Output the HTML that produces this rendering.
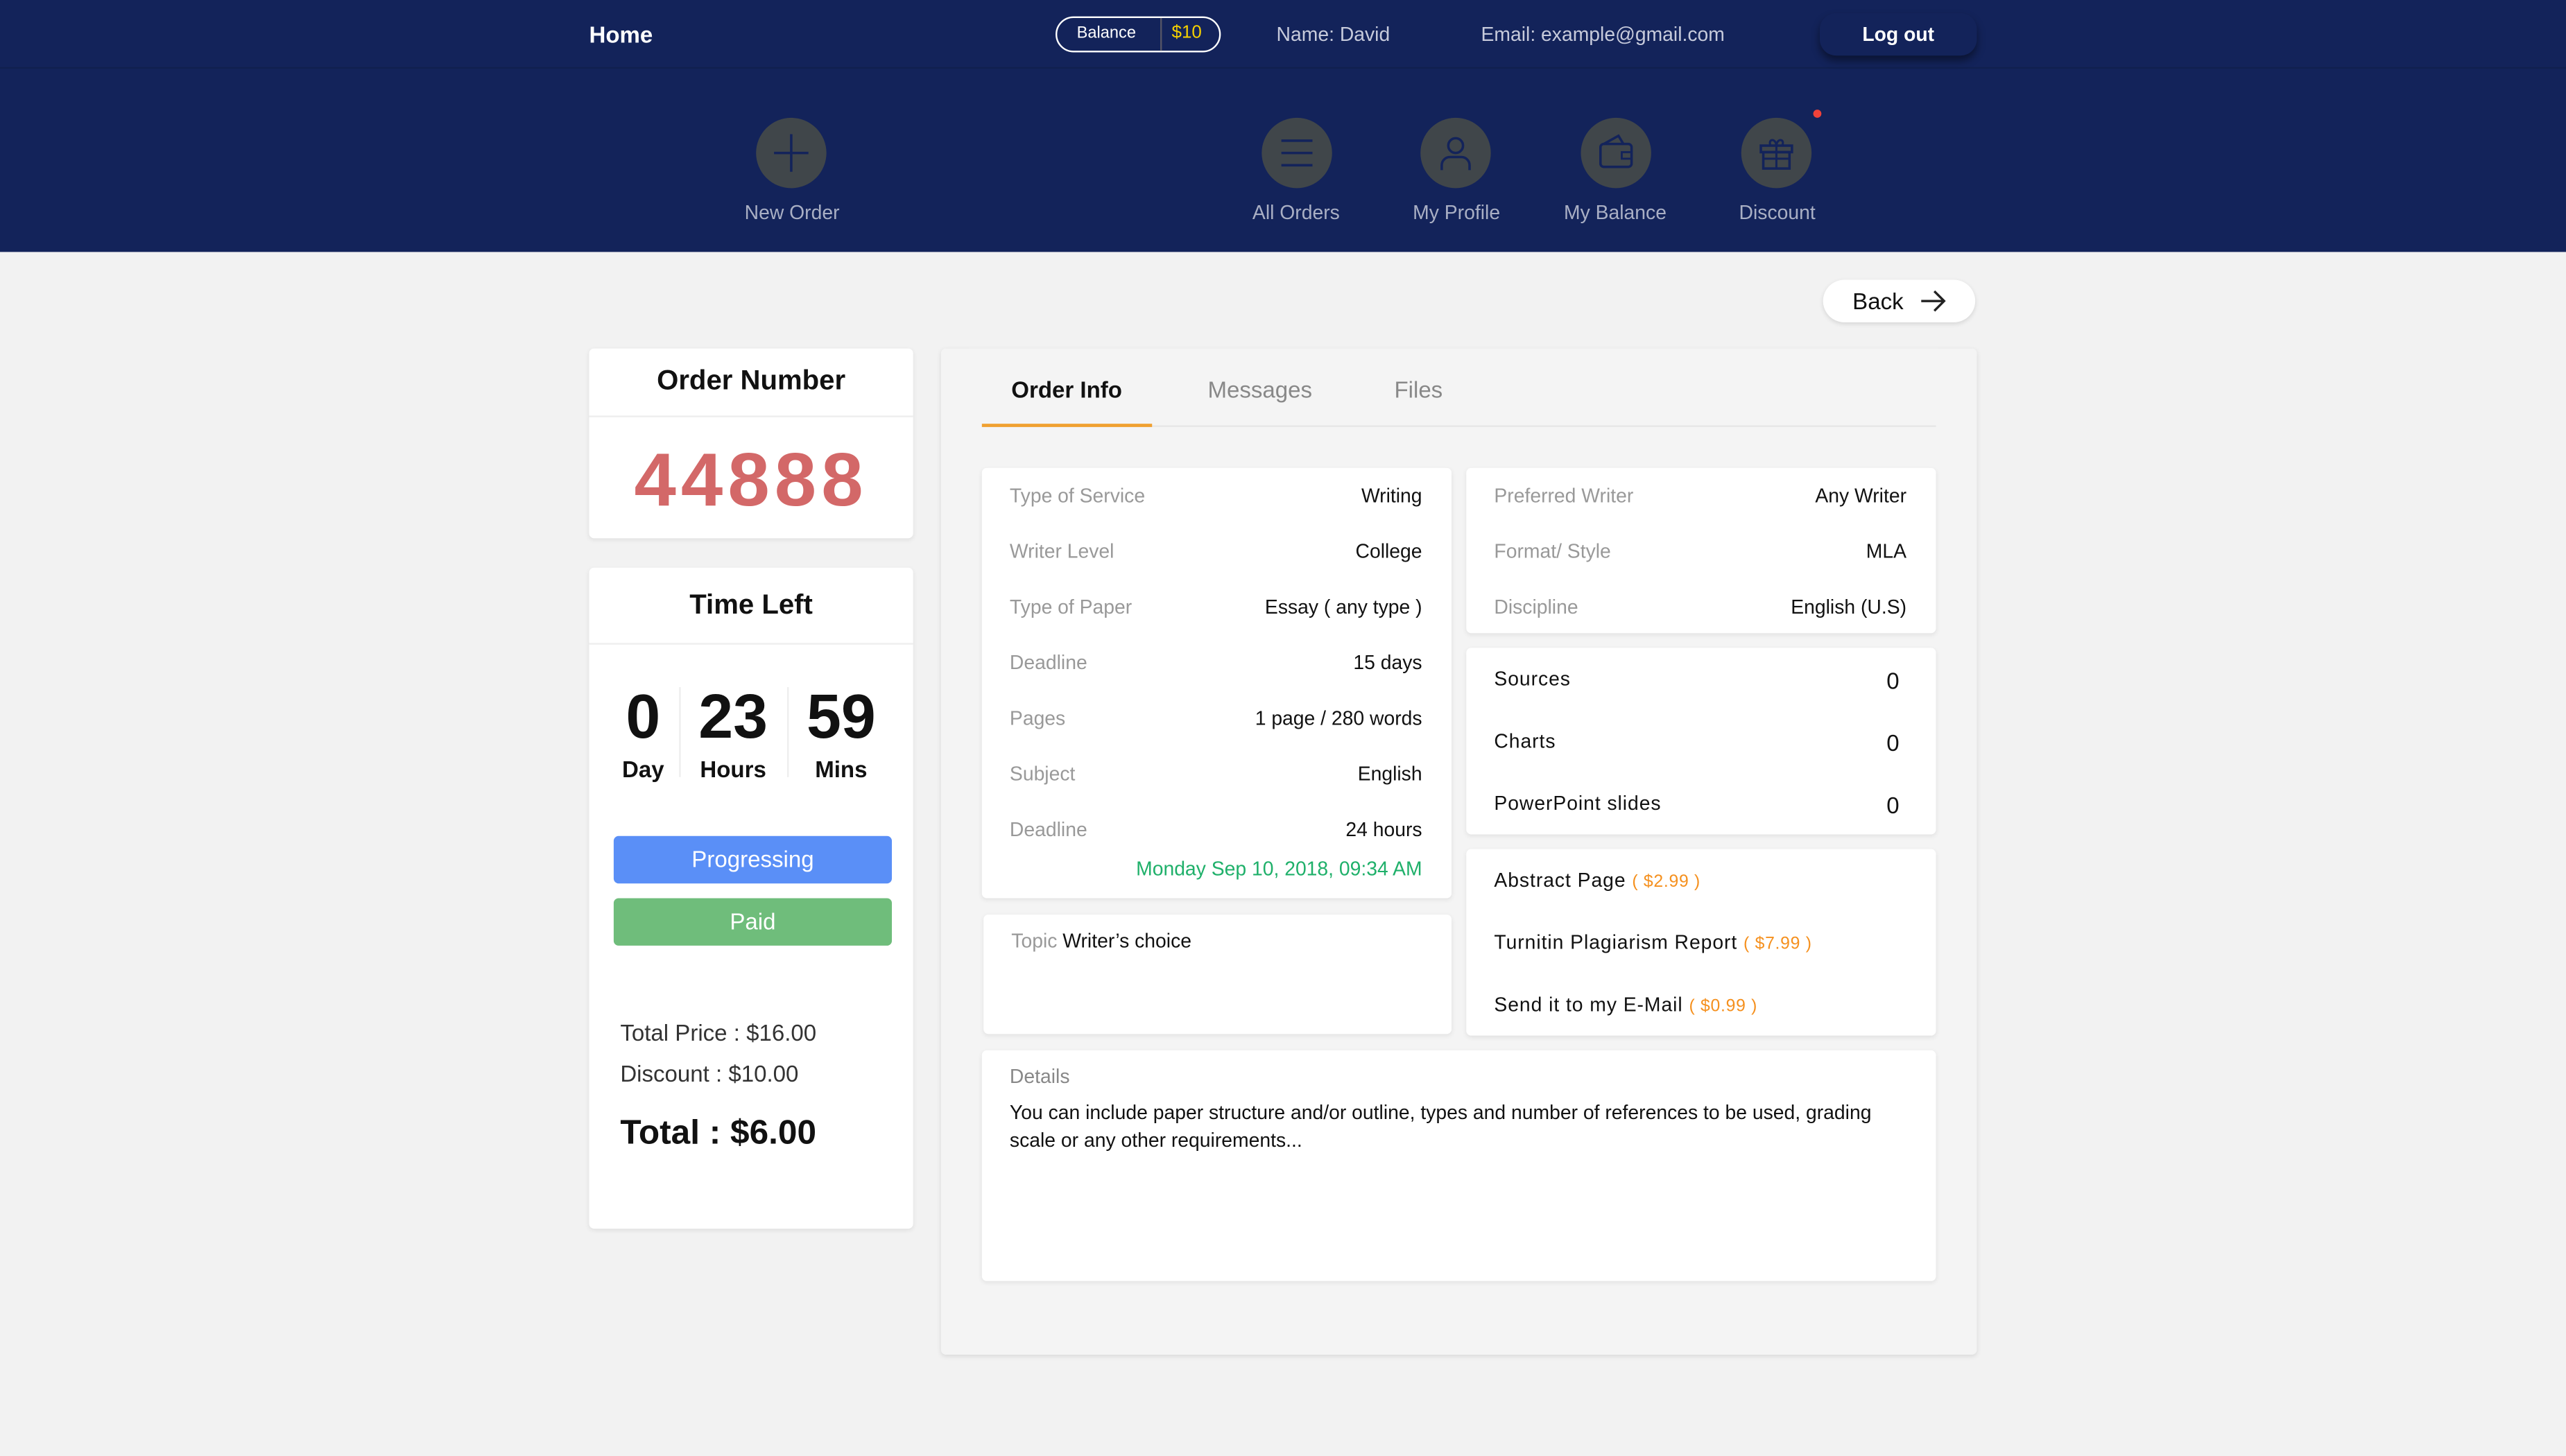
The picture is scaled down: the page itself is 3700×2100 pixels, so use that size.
<!DOCTYPE html>
<html><head><meta charset="utf-8"><style>
*{margin:0;padding:0;box-sizing:border-box}
html,body{width:3700px;height:2100px;overflow:hidden;background:#f2f2f2}
#w{width:1568px;height:890px;transform:scale(2.35969);transform-origin:0 0;position:relative;font-family:"Liberation Sans",sans-serif;background:#f2f2f2;color:#111}
.a{position:absolute}
.hdr{left:0;top:0;width:1568px;height:154px;background:#13235a}
.hl{left:0;top:41px;width:1568px;height:1px;background:#11204f}
.wt{color:#fff}
.ic{width:43px;height:43px;border-radius:50%;background:#40464a;top:72px}
.il{color:#a9afc4;font-size:12px;top:123px;text-align:center;width:100px}
.card{background:#fff;border-radius:3px;box-shadow:0 1px 3px rgba(0,0,0,.08)}
.row{position:absolute;left:17px;right:18px;font-size:12px;display:flex;justify-content:space-between}
.row span:first-child{color:#999}
.row span:last-child{color:#111}
.or{color:#f5901e;font-size:10.5px;letter-spacing:.3px}
.ls{letter-spacing:.4px}
</style></head><body><div id="w">
<div class="a hdr"></div><div class="a hl"></div>
<div class="a wt" style="left:360px;top:13px;font-size:14px;font-weight:bold">Home</div>
<div class="a" style="left:645px;top:10px;width:101px;height:22px;border:1px solid #fff;border-radius:11px"></div>
<div class="a" style="left:709px;top:11px;width:1px;height:20px;background:#556"></div>
<div class="a wt" style="left:658px;top:15px;font-size:10px">Balance</div>
<div class="a" style="left:716px;top:14px;font-size:11px;color:#f5d000">$10</div>
<div class="a" style="left:780px;top:14px;font-size:12px;color:#c6cadb">Name: David</div>
<div class="a" style="left:905px;top:14px;font-size:12px;color:#c6cadb">Email: example@gmail.com</div>
<div class="a" style="left:1112px;top:8px;width:96px;height:26px;border-radius:10px;background:#13235a;box-shadow:0 3px 5px rgba(0,0,0,.45)"></div>
<div class="a wt" style="left:1138px;top:14px;font-size:12px;font-weight:bold">Log out</div>

<div class="a ic" style="left:462px"><svg width="43" height="43" viewBox="0 0 43 43"><path d="M21.5 10v23M11 21.5h21" stroke="#13235a" stroke-width="1.5"/></svg></div>
<div class="a il" style="left:434px">New Order</div>
<div class="a ic" style="left:771px"><svg width="43" height="43"><path d="M12 14h19M12 21.5h19M12 29h19" stroke="#13235a" stroke-width="1.5"/></svg></div>
<div class="a il" style="left:742px">All Orders</div>
<div class="a ic" style="left:868px"><svg width="43" height="43"><circle cx="21.5" cy="17" r="4.5" fill="none" stroke="#13235a" stroke-width="1.5"/><path d="M13 32v-3a5 5 0 0 1 5-5h7a5 5 0 0 1 5 5v3" fill="none" stroke="#13235a" stroke-width="1.5"/></svg></div>
<div class="a il" style="left:840px">My Profile</div>
<div class="a ic" style="left:966px"><svg width="43" height="43"><rect x="12" y="16" width="19" height="14" rx="2" fill="none" stroke="#13235a" stroke-width="1.5"/><path d="M14 16l9-5 3 5" fill="none" stroke="#13235a" stroke-width="1.5"/><rect x="25" y="21" width="6" height="4" fill="none" stroke="#13235a" stroke-width="1.2"/></svg></div>
<div class="a il" style="left:937px">My Balance</div>
<div class="a ic" style="left:1064px"><svg width="43" height="43"><rect x="12" y="17" width="19" height="4" fill="none" stroke="#13235a" stroke-width="1.5"/><rect x="13.5" y="21" width="16" height="10" fill="none" stroke="#13235a" stroke-width="1.5"/><path d="M21.5 17v14M13.5 25h16M18 17c-2-4 3-5 3.5 0c.5-5 5.5-4 3.5 0" fill="none" stroke="#13235a" stroke-width="1.3"/></svg></div>
<div class="a" style="left:1108px;top:67px;width:5px;height:5px;border-radius:50%;background:#f0423a"></div>
<div class="a il" style="left:1036px">Discount</div>

<div class="a" style="left:1114px;top:171px;width:93px;height:26px;background:#fff;border-radius:13px;box-shadow:0 1px 3px rgba(0,0,0,.12)"></div>
<div class="a" style="left:1132px;top:176px;font-size:14px">Back</div>
<svg class="a" style="left:1172px;top:176px" width="18" height="16"><path d="M2 8h14M10 2l6 6-6 6" fill="none" stroke="#222" stroke-width="1.4"/></svg>

<div class="a card" style="left:360px;top:213px;width:198px;height:116px"></div>
<div class="a" style="left:360px;top:254px;width:198px;height:1px;background:#eee"></div>
<div class="a" style="left:360px;top:223px;width:198px;text-align:center;font-size:17px;font-weight:bold">Order Number</div>
<div class="a" style="left:360px;top:266px;width:198px;text-align:center;font-size:46px;font-weight:bold;color:#d36868;letter-spacing:3px">44888</div>

<div class="a card" style="left:360px;top:347px;width:198px;height:404px"></div>
<div class="a" style="left:360px;top:393px;width:198px;height:1px;background:#eee"></div>
<div class="a" style="left:360px;top:360px;width:198px;text-align:center;font-size:17px;font-weight:bold">Time Left</div>
<div class="a" style="left:415px;top:420px;width:1px;height:55px;background:#eee"></div>
<div class="a" style="left:481px;top:420px;width:1px;height:55px;background:#eee"></div>
<div class="a" style="left:372px;top:418px;width:42px;text-align:center;font-size:38px;font-weight:bold">0</div>
<div class="a" style="left:372px;top:462px;width:42px;text-align:center;font-size:14px;font-weight:bold">Day</div>
<div class="a" style="left:416px;top:418px;width:64px;text-align:center;font-size:38px;font-weight:bold">23</div>
<div class="a" style="left:416px;top:462px;width:64px;text-align:center;font-size:14px;font-weight:bold">Hours</div>
<div class="a" style="left:482px;top:418px;width:64px;text-align:center;font-size:38px;font-weight:bold">59</div>
<div class="a" style="left:482px;top:462px;width:64px;text-align:center;font-size:14px;font-weight:bold">Mins</div>
<div class="a" style="left:375px;top:511px;width:170px;height:29px;border-radius:3px;background:#5a8ff7;color:#fff;font-size:14px;text-align:center;line-height:29px">Progressing</div>
<div class="a" style="left:375px;top:549px;width:170px;height:29px;border-radius:3px;background:#6fbd7b;color:#fff;font-size:14px;text-align:center;line-height:29px">Paid</div>
<div class="a" style="left:379px;top:623px;font-size:14px;color:#333">Total Price : $16.00</div>
<div class="a" style="left:379px;top:648px;font-size:14px;color:#333">Discount : $10.00</div>
<div class="a" style="left:379px;top:681px;font-size:21px;font-weight:bold">Total : $6.00</div>

<div class="a" style="left:575px;top:213px;width:633px;height:615px;background:#f4f4f4;border-radius:3px;box-shadow:0 1px 3px rgba(0,0,0,.1)"></div>
<div class="a" style="left:600px;top:260px;width:583px;height:1px;background:#e6e6e6"></div>
<div class="a" style="left:600px;top:259px;width:104px;height:2px;background:#f0a030"></div>
<div class="a" style="left:618px;top:230px;font-size:14px;font-weight:bold">Order Info</div>
<div class="a" style="left:738px;top:230px;font-size:14px;color:#888">Messages</div>
<div class="a" style="left:852px;top:230px;font-size:14px;color:#888">Files</div>

<div class="a card" style="left:600px;top:286px;width:287px;height:263px">
<div class="row" style="top:10px"><span>Type of Service</span><span>Writing</span></div>
<div class="row" style="top:44px"><span>Writer Level</span><span>College</span></div>
<div class="row" style="top:78px"><span>Type of Paper</span><span>Essay ( any type )</span></div>
<div class="row" style="top:112px"><span>Deadline</span><span>15 days</span></div>
<div class="row" style="top:146px"><span>Pages</span><span>1 page / 280 words</span></div>
<div class="row" style="top:180px"><span>Subject</span><span>English</span></div>
<div class="row" style="top:214px"><span>Deadline</span><span>24 hours</span></div>
<div class="a" style="right:18px;top:238px;font-size:12px;color:#1fb06a">Monday Sep 10, 2018, 09:34 AM</div>
</div>
<div class="a card" style="left:601px;top:559px;width:286px;height:73px"></div>
<div class="a" style="left:618px;top:568px;font-size:12px;color:#999">Topic <span style="color:#111">Writer’s choice</span></div>

<div class="a card" style="left:896px;top:286px;width:287px;height:101px">
<div class="row" style="top:10px"><span>Preferred Writer</span><span>Any Writer</span></div>
<div class="row" style="top:44px"><span>Format/ Style</span><span>MLA</span></div>
<div class="row" style="top:78px"><span>Discipline</span><span>English (U.S)</span></div>
</div>
<div class="a card" style="left:896px;top:396px;width:287px;height:114px">
<div class="row ls" style="top:12px;right:22px"><span style="color:#111">Sources</span><span style="font-size:14px">0</span></div>
<div class="row ls" style="top:50px;right:22px"><span style="color:#111">Charts</span><span style="font-size:14px">0</span></div>
<div class="row ls" style="top:88px;right:22px"><span style="color:#111">PowerPoint slides</span><span style="font-size:14px">0</span></div>
</div>
<div class="a card" style="left:896px;top:519px;width:287px;height:114px">
<div class="a ls" style="left:17px;top:12px;font-size:12px">Abstract Page <span class="or">( $2.99 )</span></div>
<div class="a ls" style="left:17px;top:50px;font-size:12px">Turnitin Plagiarism Report <span class="or">( $7.99 )</span></div>
<div class="a ls" style="left:17px;top:88px;font-size:12px">Send it to my E-Mail <span class="or">( $0.99 )</span></div>
</div>
<div class="a card" style="left:600px;top:642px;width:583px;height:141px">
<div class="a" style="left:17px;top:9px;font-size:12px;color:#888">Details</div>
<div class="a" style="left:17px;top:30px;width:530px;font-size:12px;line-height:17px">You can include paper structure and/or outline, types and number of references to be used, grading scale or any other requirements...</div>
</div>
</div></body></html>
